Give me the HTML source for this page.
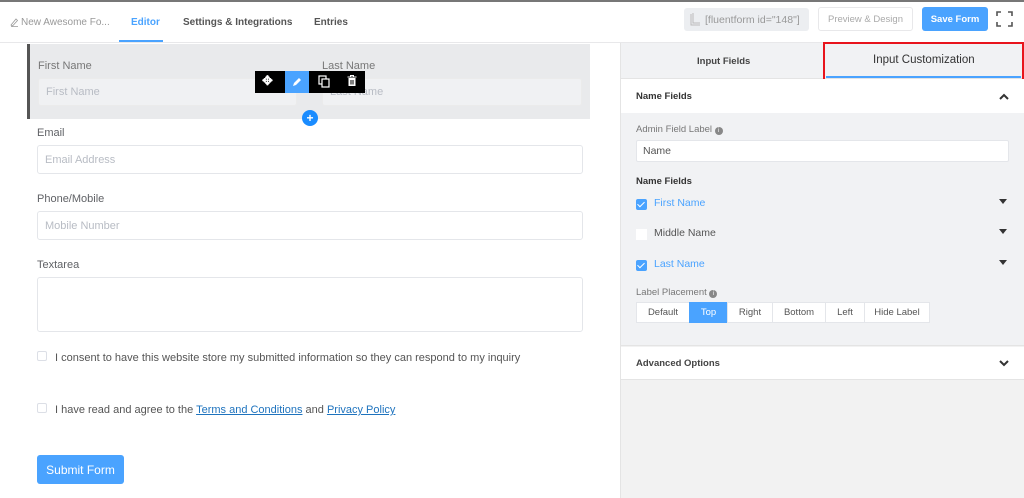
<!DOCTYPE html>
<html><head><meta charset="utf-8"><style>
*{box-sizing:border-box;margin:0;padding:0}
body{width:1024px;height:498px;overflow:hidden;background:#fff;font-family:"Liberation Sans",sans-serif;position:relative;color:#606266}
.a{position:absolute}
.lbl{font-size:11px;color:#606266}
.inp{position:absolute;border:1px solid #e4e6ea;border-radius:3px;background:#fff;font-size:11px;color:#b8bcc4;padding-left:7px;display:flex;align-items:center}
.cb{position:absolute;width:10px;height:10px;border:1px solid #dcdfe6;background:#fff;border-radius:2px}
.cbx{position:absolute;width:11px;height:11px;background:#4aa3ff;border-radius:2px}
.cbx:after{content:"";position:absolute;left:3px;top:1px;width:3px;height:6px;border:solid #fff;border-width:0 1px 1px 0;transform:rotate(45deg)}
.tri{position:absolute;width:0;height:0;border-left:4px solid transparent;border-right:4px solid transparent;border-top:5px solid #333}
.pb{position:absolute;top:302px;height:21px;border:1px solid #e4e6ea;background:#fff;font-size:9.5px;color:#555;display:flex;align-items:center;justify-content:center}
</style></head><body>
<div class="a" style="left:0;top:0;width:1024px;height:2px;background:#777"></div>
<div class="a" style="left:0;top:42px;width:1024px;height:1px;background:#e8e8ea"></div>
<svg class="a" style="left:10px;top:17px" width="9" height="10" viewBox="0 0 9 10"><path d="M1 8 L6 2 L7.5 3.5 L2.5 9 Z M1 9.5 H8" stroke="#999" fill="none" stroke-width="0.8"/></svg>
<div class="a" style="left:21px;top:17px;font-size:10px;color:#999">New Awesome Fo...</div>
<div class="a" style="left:131px;top:17px;font-size:10px;color:#4aa3ff;font-weight:bold">Editor</div>
<div class="a" style="left:119px;top:40px;width:44px;height:2px;background:#4aa3ff"></div>
<div class="a" style="left:183px;top:17px;font-size:10px;color:#555;font-weight:bold">Settings &amp; Integrations</div>
<div class="a" style="left:314px;top:17px;font-size:10px;color:#555;font-weight:bold">Entries</div>
<div class="a" style="left:684px;top:8px;width:125px;height:23px;background:#eceef1;border-radius:3px"></div>
<svg class="a" style="left:689px;top:13px" width="12" height="13"><path d="M2 1 V12 H11 M4 0 V10 H11" stroke="#bbb" fill="none"/></svg>
<div class="a" style="left:705px;top:14px;font-size:10.5px;color:#999">[fluentform id="148"]</div>
<div class="a" style="left:818px;top:7px;width:95px;height:24px;border:1px solid #e8e8ea;border-radius:3px;font-size:9.5px;color:#aaa;display:flex;align-items:center;justify-content:center">Preview &amp; Design</div>
<div class="a" style="left:922px;top:7px;width:66px;height:24px;background:#4aa3ff;border-radius:3px;font-size:9.5px;color:#fff;font-weight:bold;display:flex;align-items:center;justify-content:center">Save Form</div>
<svg class="a" style="left:996px;top:11px" width="17" height="16"><path d="M1 5V1H5 M12 1H16V5 M16 11V15H12 M5 15H1V11" stroke="#555" stroke-width="1.6" fill="none"/></svg>
<div class="a" style="left:27px;top:44px;width:563px;height:75px;background:#e9eaec;border-left:3px solid #555"></div>
<div class="a lbl" style="left:38px;top:60px;color:#777">First Name</div>
<div class="a lbl" style="left:322px;top:60px;color:#777">Last Name</div>
<div class="inp" style="left:38px;top:78px;width:259px;height:28px;background:#f0f1f3;border-color:#ebebeb">First Name</div>
<div class="inp" style="left:322px;top:78px;width:260px;height:28px;background:#f0f1f3;border-color:#ebebeb">Last Name</div>
<div class="a" style="left:255px;top:71px;width:110px;height:22px;background:#000"></div>
<div class="a" style="left:285px;top:71px;width:24px;height:22px;background:#4aa3ff"></div>
<div class="a" style="left:262px;top:73px;color:#fff;font-size:13px;font-weight:bold">✥</div>
<svg class="a" style="left:291px;top:76px" width="12" height="12"><path d="M2 10 L3 7 L8 2 L10 4 L5 9 Z" fill="#fff"/></svg>
<svg class="a" style="left:318px;top:75px" width="12" height="13"><rect x="1" y="1" width="7" height="8" fill="none" stroke="#fff" stroke-width="1.2"/><rect x="4" y="4" width="7" height="8" fill="#000" stroke="#fff" stroke-width="1.2"/></svg>
<svg class="a" style="left:347px;top:75px" width="10" height="12"><path d="M0.5 2H9.5 M3.5 2V0.5H6.5V2" stroke="#fff" fill="none"/><rect x="1.5" y="3" width="7" height="8" fill="#fff"/><path d="M4 5V9.5M6 5V9.5" stroke="#000"/></svg>
<div class="a" style="left:302px;top:110px;width:16px;height:16px;border-radius:50%;background:#1a8cff;color:#fff;font-size:12px;font-weight:bold;line-height:16px;text-align:center">+</div>
<div class="a lbl" style="left:37px;top:127px">Email</div>
<div class="inp" style="left:37px;top:145px;width:546px;height:29px">Email Address</div>
<div class="a lbl" style="left:37px;top:193px">Phone/Mobile</div>
<div class="inp" style="left:37px;top:211px;width:546px;height:29px">Mobile Number</div>
<div class="a lbl" style="left:37px;top:259px">Textarea</div>
<div class="inp" style="left:37px;top:277px;width:546px;height:55px"></div>
<div class="cb" style="left:37px;top:351px"></div>
<div class="a" style="left:55px;top:352px;font-size:11px;color:#555">I consent to have this website store my submitted information so they can respond to my inquiry</div>
<div class="cb" style="left:37px;top:403px"></div>
<div class="a" style="left:55px;top:404px;font-size:11px;color:#555">I have read and agree to the <span style="color:#1e73be;text-decoration:underline">Terms and Conditions</span> and <span style="color:#1e73be;text-decoration:underline">Privacy Policy</span></div>
<div class="a" style="left:37px;top:455px;width:87px;height:29px;background:#4aa3ff;border-radius:3px;color:#fff;font-size:12px;display:flex;align-items:center;justify-content:center">Submit Form</div>
<div class="a" style="left:620px;top:43px;width:404px;height:455px;background:#f2f2f2;border-left:1px solid #e4e4e4"></div>
<div class="a" style="left:621px;top:43px;width:403px;height:36px;background:#f1f2f4;border-bottom:1px solid #e4e4e4"></div>
<div class="a" style="left:697px;top:56px;font-size:9.5px;color:#444;font-weight:bold">Input Fields</div>
<div class="a" style="left:823px;top:42px;width:201px;height:41px;border:2px solid #e8141c"></div>
<div class="a" style="left:826px;top:76px;width:195px;height:2px;background:#4aa3ff"></div>
<div class="a" style="left:873px;top:54px;font-size:11.5px;color:#333">Input Customization</div>
<div class="a" style="left:621px;top:79px;width:403px;height:34px;background:#fff"></div>
<div class="a" style="left:636px;top:91px;font-size:9.5px;color:#333;font-weight:bold">Name Fields</div>
<svg class="a" style="left:999px;top:93px" width="10" height="7"><path d="M1 6L5 2L9 6" stroke="#333" stroke-width="2" fill="none"/></svg>
<div class="a" style="left:621px;top:113px;width:403px;height:233px;background:#f1f2f4;border-bottom:1px solid #e4e4e4"></div>
<div class="a" style="left:636px;top:124px;font-size:9.5px;color:#777">Admin Field Label <span style="display:inline-block;width:8px;height:8px;border-radius:50%;background:#888;color:#fff;font-size:6px;text-align:center;line-height:8px">i</span></div>
<div class="a" style="left:636px;top:140px;width:373px;height:22px;background:#fff;border:1px solid #e4e6ea;border-radius:2px;font-size:10.5px;color:#555;padding-left:6px;line-height:20px">Name</div>
<div class="a" style="left:636px;top:176px;font-size:9.5px;color:#333;font-weight:bold">Name Fields</div>
<div class="cbx" style="left:636px;top:199px"></div>
<div class="a" style="left:654px;top:197px;font-size:10.5px;color:#4aa3ff">First Name</div>
<div class="tri" style="left:999px;top:199px"></div>
<div class="a" style="left:636px;top:229px;width:11px;height:11px;background:#fff"></div>
<div class="a" style="left:654px;top:227px;font-size:10.5px;color:#555">Middle Name</div>
<div class="tri" style="left:999px;top:229px"></div>
<div class="cbx" style="left:636px;top:260px"></div>
<div class="a" style="left:654px;top:258px;font-size:10.5px;color:#4aa3ff">Last Name</div>
<div class="tri" style="left:999px;top:260px"></div>
<div class="a" style="left:636px;top:287px;font-size:9.5px;color:#777">Label Placement <span style="display:inline-block;width:8px;height:8px;border-radius:50%;background:#888;color:#fff;font-size:6px;text-align:center;line-height:8px">i</span></div>
<div class="pb" style="left:636px;width:54px">Default</div>
<div class="pb" style="left:689px;width:39px;background:#4aa3ff;border-color:#4aa3ff;color:#fff">Top</div>
<div class="pb" style="left:727px;width:46px">Right</div>
<div class="pb" style="left:772px;width:54px">Bottom</div>
<div class="pb" style="left:825px;width:40px">Left</div>
<div class="pb" style="left:864px;width:66px">Hide Label</div>
<div class="a" style="left:621px;top:347px;width:403px;height:33px;background:#fff;border-bottom:1px solid #e4e4e4"></div>
<div class="a" style="left:636px;top:358px;font-size:9.5px;color:#444;font-weight:bold">Advanced Options</div>
<svg class="a" style="left:999px;top:360px" width="10" height="7"><path d="M1 1L5 5L9 1" stroke="#333" stroke-width="2" fill="none"/></svg>
</body></html>
